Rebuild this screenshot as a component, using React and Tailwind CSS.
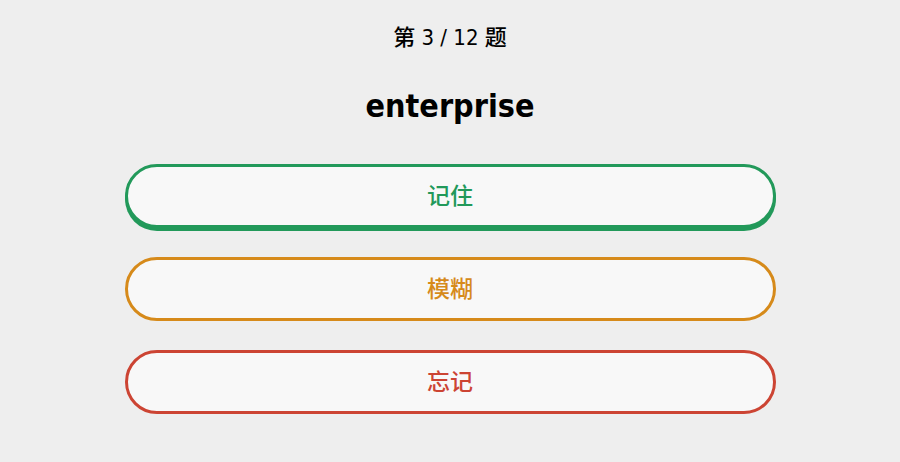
import React from 'react';

const choices = [
  { label: '记住', color: 'border-[#22995a] text-[#22995a] shadow-[0_3px_0_#22995a]' },
  { label: '模糊', color: 'border-[#d68a1a] text-[#d68a1a]' },
  { label: '忘记', color: 'border-[#cc4433] text-[#cc4433]' },
];

const App = () => {
  return (
    <div
      className="min-h-[462px] bg-[#eeeeee] flex flex-col items-center pt-[22px]"
      style={{ fontFamily: '"DejaVu Sans Condensed", "Noto Sans CJK SC", sans-serif' }}
    >
      {/* Progress */}
      <div className="text-[22px] leading-[32px] font-medium text-black">第 3 / 12 题</div>

      {/* Word */}
      <h1 className="mt-[30px] text-[32px] leading-[44px] font-bold text-black">enterprise</h1>

      {/* Answer buttons */}
      <div className="mt-[36px] flex flex-col gap-[29px]">
        {choices.map((c) => (
          <button
            key={c.label}
            className={`w-[651px] h-[64px] rounded-full border-[3px] bg-[#f8f8f8] text-[23px] font-medium ${c.color}`}
          >
            {c.label}
          </button>
        ))}
      </div>
    </div>
  );
};

export default App;
